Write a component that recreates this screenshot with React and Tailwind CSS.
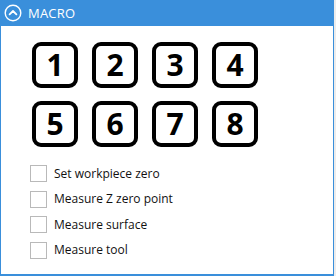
import { useState } from 'react';

const macros = [1, 2, 3, 4, 5, 6, 7, 8];
const options = ['Set workpiece zero', 'Measure Z zero point', 'Measure surface', 'Measure tool'];

const App = () => {
  const [checked, setChecked] = useState([false, false, false, false]);

  const toggle = (i) => setChecked((c) => c.map((v, j) => (j === i ? !v : v)));

  return (
    <div className="w-[336px] h-[276px] bg-[#ececec] font-['Open_Sans',sans-serif]">
      <div className="w-[334px] h-[276px] bg-white border-x border-b-2 border-[#3a8fdb] flex flex-col">
        <div className="h-[26px] -mx-px bg-[#3a8fdb] flex items-center pl-[4px] gap-[6px] text-white">
          <svg width="18" height="18" viewBox="0 0 18 18" fill="none">
            <circle cx="9" cy="9" r="7.8" stroke="white" strokeWidth="1.4" />
            <path d="M5.6 10.4 L9 7 L12.4 10.4" stroke="white" strokeWidth="1.8" strokeLinecap="round" strokeLinejoin="round" />
          </svg>
          <span className="text-[13px] leading-none tracking-[0.2px]">MACRO</span>
        </div>

        <div className="grid grid-cols-4 gap-x-[14px] gap-y-[13px] w-fit ml-[31px] mt-[16px]">
          {macros.map((n) => (
            <button
              key={n}
              className="w-[46px] h-[46px] border-[4px] border-black rounded-[9px] flex items-center justify-center text-black text-[30px] font-bold leading-none"
            >
              {n}
            </button>
          ))}
        </div>

        <div className="flex flex-col gap-[8.5px] ml-[29px] mt-[18px]">
          {options.map((label, i) => (
            <label key={label} className="flex items-center gap-[7px] cursor-pointer">
              <span
                onClick={() => toggle(i)}
                className="w-[17px] h-[17px] border border-[#b9b9b9] bg-white flex items-center justify-center text-[12px]"
              >
                {checked[i] ? '✓' : ''}
              </span>
              <span className="text-[12px] text-[#111] leading-none">{label}</span>
            </label>
          ))}
        </div>
      </div>
    </div>
  );
};

export default App;
